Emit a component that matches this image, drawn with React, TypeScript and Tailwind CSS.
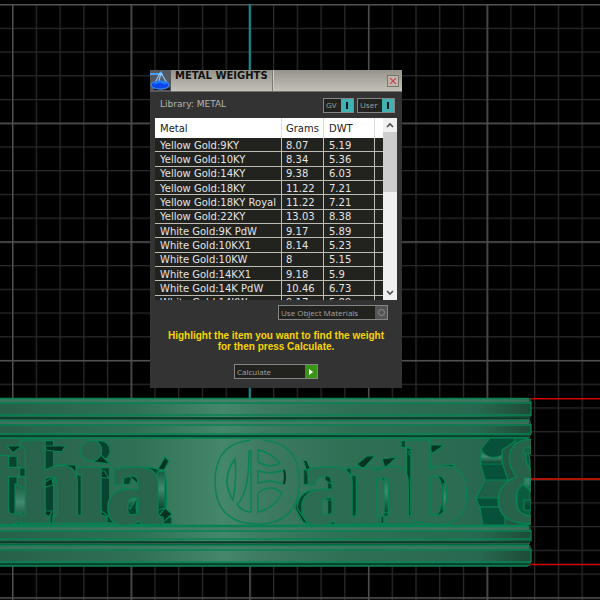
import React from "react";

const metals = [
  ["Yellow Gold:9KY", "8.07", "5.19"],
  ["Yellow Gold:10KY", "8.34", "5.36"],
  ["Yellow Gold:14KY", "9.38", "6.03"],
  ["Yellow Gold:18KY", "11.22", "7.21"],
  ["Yellow Gold:18KY Royal", "11.22", "7.21"],
  ["Yellow Gold:22KY", "13.03", "8.38"],
  ["White Gold:9K PdW", "9.17", "5.89"],
  ["White Gold:10KX1", "8.14", "5.23"],
  ["White Gold:10KW", "8", "5.15"],
  ["White Gold:14KX1", "9.18", "5.9"],
  ["White Gold:14K PdW", "10.46", "6.73"],
  ["White Gold:14KW", "9.17", "5.89"],
];

// Horizontal rails of the ring: top edge and height
const rails = [
  { y: 398, h: 20 },
  { y: 420, h: 17 },
  { y: 526, h: 16 },
  { y: 545, h: 20 },
];

// Recesses cut behind the lettering
const darkFacets = [
  "7,446 22,446 13,453", "28,447 38,447 33,452", "45,446 65,446 62,452 46,450",
  "59,465 75,465 79,470 72,477", "86,453 100,454 110,464 95,462",
  "91,471 104,471 109,478 97,477", "125,467 138,474 138,484 130,477",
  "165,457 169,461 164,470 158,469", "42,484 52,478 53,485 42,488",
  "165,508 172,514 160,525 152,525", "38,523 44,511 52,511 46,524",
  "100,510 108,516 100,524 91,524", "126,524 138,513 138,522",
  "303,460 307,461 314,478 310,480", "298,494 297,508 308,524 303,522 295,508",
  "325,472 331,474 331,484 325,480", "325,494 332,494 332,500 326,500",
  "353,469 362,469 359,475 353,474", "327,520 332,513 337,524 331,524",
  "356,518 364,516 369,524 362,524", "357,464 367,456 375,456 363,469",
  "382,459 397,457 385,468", "423,445 444,445 433,453",
  "408,452 424,447 425,452 410,455", "443,465 455,465 443,474",
  "412,520 420,515 432,520 425,524",
];

const litFacets = [
  "69,480 76,482 77,510 79,524 66,524", "15,484 27,490 27,510 35,524 15,524",
  "157,472 165,471 165,508 157,510", "122,487 138,497 130,509 122,500",
  "358,478 367,474 367,510 358,510", "384,480 394,472 395,515 384,512",
  "411,478 426,478 426,510 411,510", "443,484 452,480 455,505 450,520 443,510",
];

function Viewport() {
  return (
    <svg className="absolute inset-0 h-full w-full" aria-label="Ring model, front view">
      <defs>
        <pattern id="minor" x="12" y="4" width="23.73" height="23.73" patternUnits="userSpaceOnUse">
          <path d="M0 .5H24M.5 0V24" stroke="#2b2b2b" strokeWidth="1.5" />
        </pattern>
        <pattern id="major" x="12" y="4" width="118.65" height="118.65" patternUnits="userSpaceOnUse">
          <path d="M0 .7H119M.7 0V119" stroke="#505050" strokeWidth="1.4" />
        </pattern>
        <linearGradient id="metal" gradientUnits="userSpaceOnUse" x1="0" x2="532" y1="0" y2="0">
          <stop offset="0" stopColor="#28604a" />
          <stop offset=".25" stopColor="#2f7055" />
          <stop offset=".42" stopColor="#45876b" />
          <stop offset=".5" stopColor="#3d7a61" />
          <stop offset=".65" stopColor="#2f7055" />
          <stop offset=".9" stopColor="#296850" />
          <stop offset="1" stopColor="#1d4a37" />
        </linearGradient>
        <linearGradient id="wall" x1="0" x2="0" y1="0" y2="1">
          <stop offset="0" stopColor="#175a40" />
          <stop offset=".45" stopColor="#438a70" />
          <stop offset="1" stopColor="#06402b" />
        </linearGradient>
        <linearGradient id="groove" x1="0" x2="0" y1="0" y2="1">
          <stop offset="0" stopColor="#07543a" />
          <stop offset=".5" stopColor="#0a3c2a" />
          <stop offset="1" stopColor="#41705c" />
        </linearGradient>
        <clipPath id="body"><rect x="0" y="437" width="531" height="89" /></clipPath>
        <g id="left-word"><text x="-18 19 75 106" y="522">thia</text></g>
        <g id="right-word"><text x="300 350 406" y="522">anb</text></g>
      </defs>

      <rect x="0" y="4" width="100%" height="100%" fill="url(#minor)" />
      <rect x="0" y="4" width="100%" height="100%" fill="url(#major)" />
      <path d="M249.700 4V398" stroke="#0d8f91" strokeWidth="2" />
      <path d="M528 398.700H4000M528 564.500H4000" stroke="#d60404" strokeWidth="1.500" />
      <path d="M528 479H4000" stroke="#ad1404" strokeWidth="2" />

      <path d="M0 398H529L531 401V416L529 420L531 423V434L528 438V526L531 530V541L529 544L531 548V562L528 566H0Z" fill="#085b3d" />
      <rect x="0" y="438" width="529" height="87" fill="url(#metal)" />
      {rails.map((r) => (
        <g key={r.y}>
          <rect x="0" y={r.y} width="531" height={r.h} rx="2" fill="url(#metal)" />
          <rect x="0" y={r.y + 1} width="529" height="3" fill="#4c7d69" opacity=".65" />
          <path d={`M0 ${r.y + 0.5}H529M0 ${r.y + 5}H531M0 ${r.y + r.h - 3}H531`} stroke="#078253" strokeWidth="1.300" />
        </g>
      ))}
      {[417, 435, 541, 563].map((y) => (
        <rect key={y} x="0" y={y} width="530" height="3" fill="url(#groove)" />
      ))}
      <path d="M0 438H528M0 525.500H528M0 566H528M531 401V416M531 424V434M531 530V541M531 548V562" stroke="#078253" strokeWidth="1.300" />

      <g clipPath="url(#body)" stroke="#078253" strokeWidth="1.200" strokeLinejoin="miter">
        <g className="font-['Liberation_Serif',serif] text-[114px] font-bold">
          <use href="#left-word" x="9" fill="#07432f" stroke="#078253" strokeWidth="4" />
          <use href="#left-word" x="9" fill="#07432f" stroke="#07432f" strokeWidth="1.500" />
          <use href="#right-word" x="-5" fill="#07432f" stroke="#078253" strokeWidth="4" />
          <use href="#right-word" x="-5" fill="#07432f" stroke="#07432f" strokeWidth="1.500" />
          {litFacets.map((p) => <polygon key={p} points={p} fill="url(#wall)" />)}
          {darkFacets.map((p) => <polygon key={p} points={p} fill="#063322" />)}
          <use href="#left-word" strokeWidth="5" />
          <use href="#right-word" strokeWidth="5" />
          <use href="#left-word" fill="#29654d" stroke="#29654d" strokeWidth="2.500" />
          <use href="#right-word" fill="#2c6c52" stroke="#2c6c52" strokeWidth="2.500" />
        </g>

        <g fill="none" className="font-['Liberation_Serif',serif] text-[124px] font-bold">
          <text x="209" y="523">O</text>
          <ellipse cx="257" cy="481" rx="25" ry="42" fill="url(#metal)" stroke="none" />
          <path strokeWidth="1.500" d="M235 459Q220 479 233 500Q237 480 235 459ZM249 451H251V512Q242 512 237 504Q249 495 249 451ZM258 450Q270 452 280 463Q270 469 258 462ZM258 471Q272 475 284 470V484Q270 479 258 483ZM258 493Q271 483 282 493Q275 508 258 512Z" />
          <path d="M284 470Q286 477 284 484" stroke="#063a28" strokeWidth="2" />
        </g>

        <path d="M490 438H520L502 450V462L508 480L498 498L505 512V525H483L480 508L476 498L485 480L480 462L482 448Z" fill="#07513a" />
        <path d="M481 450Q490 462 502 455V464H481Z" fill="url(#wall)" />
        <path d="M485 480H508L498 498H476Z" fill="#1e6048" />
        <path d="M480 507H500" />
        <path d="M515 438H526L530 460V525H518Z" fill="#0b5b3e" />
        <g className="font-['Liberation_Serif',serif] text-[122px] font-bold">
          <text x="492" y="522" strokeWidth="3" fill="#27624a" style={{ paintOrder: "stroke" }}>&amp;</text>
        </g>
        <path d="M524 448H531V454H524ZM524 478H531V486H524ZM524 500H531V510H524Z" fill="url(#wall)" />
      </g>
    </svg>
  );
}

function ScaleIcon() {
  return (
    <svg viewBox="0 0 21 22" className="h-[22px] w-[21px] shrink-0 bg-[#55585c]" aria-hidden="true">
      <path d="M4 17Q11 23 20 17V20H4Z" fill="#17191e" />
      <path d="M0 3L9 3L11 1L13 4L12 6L9 5L0 5Z" fill="#4aa0ff" />
      <path d="M10 3L5 13M11 3L9 11M11 3L17 13" stroke="#8cc6ff" strokeWidth="1.200" fill="none" />
      <ellipse cx="10" cy="15" rx="9" ry="4" fill="#0a46e8" stroke="#3d8dff" />
      <path d="M4 14Q10 10 16 14" stroke="#1a7cff" strokeWidth="2" fill="none" />
    </svg>
  );
}

const smallButton =
  "flex h-[15px] items-center justify-between border border-[#858585] bg-[#22221e] pl-[2px] text-[8px] leading-3 text-[#a3a3a3] font-['Open_Sans',sans-serif]";

function Toggle({ label, width }: { label: string; width: string }) {
  return (
    <button type="button" aria-pressed="true" className={`${smallButton} ${width}`}>
      <span>{label}</span>
      <span className="flex h-[13px] w-3 items-center justify-center bg-[#42b1b2]">
        <span className="h-[7px] w-[2px] bg-[#031818]" />
      </span>
    </button>
  );
}

function Arrow({ down = false }: { down?: boolean }) {
  return (
    <button type="button" aria-label={down ? "Scroll down" : "Scroll up"} className="flex h-[14px] w-full shrink-0 items-center justify-center">
      <svg viewBox="0 0 8 6" className="h-[6px] w-2" aria-hidden="true">
        <path d={down ? "M1 1L4 4L7 1" : "M1 5L4 2L7 5"} fill="none" stroke="#505050" strokeWidth="1.700" />
      </svg>
    </button>
  );
}

const line = "border-b border-r border-[#bdbbb4]";

export default function App() {
  return (
    <main className="relative h-screen min-h-[600px] overflow-hidden bg-black font-['DejaVu_Sans',sans-serif] text-[10px]">
      <Viewport />
      <section aria-labelledby="title" className="absolute left-[150px] top-[70px] w-[252px] bg-[#333333] pb-[9px]">
        <header className="flex h-[22px] border-b border-[#77756f] bg-linear-to-b from-[#96938a] to-[#c3c1b9]">
          <ScaleIcon />
          <h1 id="title" className="w-[102px] shrink-0 border-r border-[#7b796f] pl-1 text-[10px] leading-3 font-bold whitespace-nowrap text-[#11110f]">METAL WEIGHTS</h1>
          <div className="flex flex-1 items-center justify-end border-l border-[#d0cec6] pr-[3px]">
            <button type="button" aria-label="Close" className="flex h-3 w-3 items-center justify-center border border-[#77746e] bg-[#bdb9b0]">
              <svg viewBox="0 0 8 8" className="h-2 w-2" aria-hidden="true"><path d="M1 1L7 7M7 1L1 7" stroke="#c94b4b" strokeWidth="1.200" /></svg>
            </button>
          </div>
        </header>

        <div className="flex h-[26px] items-center justify-between pr-[7px] pl-[10px]">
          <span className="text-[9px] text-[#b4b4b4]">Library: METAL</span>
          <div className="flex gap-[3px]">
            <Toggle label="GV" width="w-[31px]" />
            <Toggle label="User" width="w-[38px]" />
          </div>
        </div>

        <div className="mx-[5px] flex h-[182px] overflow-hidden">
          <div className="min-w-0 flex-1 overflow-hidden">
            <table className="h-[192px] w-full table-fixed border-separate border-spacing-0 bg-[#22221e] text-left leading-[11px] text-[#e4e4e4]">
              <colgroup>
                <col className="w-[127px]" />
                <col className="w-[42px]" />
                <col className="w-[51px]" />
                <col />
              </colgroup>
              <thead>
                <tr className="h-5 bg-white text-[#222222]">
                  <th scope="col" className="border-r border-[#dddddd] p-0 pl-[5px] font-normal">Metal</th>
                  <th scope="col" className="border-r border-[#dddddd] p-0 pl-1 font-normal">Grams</th>
                  <th scope="col" className="border-r border-[#dddddd] p-0 pl-[5px] font-normal">DWT</th>
                  <td className="p-0" />
                </tr>
              </thead>
              <tbody>
                {metals.map(([name, grams, dwt], i) => (
                  <tr key={i}>
                    <td className={`${line} p-0 pt-px pl-[5px] whitespace-nowrap`}>{name}</td>
                    <td className={`${line} p-0 pt-px pl-1`}>{grams}</td>
                    <td className={`${line} p-0 pt-px pl-[5px]`}>{dwt}</td>
                    <td className="border-b border-[#bdbbb4] p-0" />
                  </tr>
                ))}
              </tbody>
            </table>
          </div>
          <div className="flex w-[14px] flex-col bg-[#f0f0f0]">
            <Arrow />
            <div className="h-[60px] bg-[#cdcdcd]" />
            <div className="flex-1" />
            <Arrow down />
          </div>
        </div>

        <div className="mt-[5px] flex justify-end pr-[14px]">
          <button type="button" className={`${smallButton} w-[110px]`}>
            <span className="whitespace-nowrap">Use Object Materials</span>
            <span className="flex h-[13px] w-3 items-center justify-center bg-[#555555]">
              <span className="h-[7px] w-[7px] rounded-full border border-[#8b8b8b]" />
            </span>
          </button>
        </div>

        <p className="mt-[10px] text-center font-['Liberation_Sans',sans-serif] text-[10px] leading-[11px] font-bold text-[#f6d500]">
          Highlight the item you want to find the weight
          <br />
          for then press Calculate.
        </p>

        <div className="mt-3 flex justify-center">
          <button type="button" className={`${smallButton} w-[84px]`}>
            <span>Calculate</span>
            <span className="flex h-[13px] w-3 items-center justify-center bg-[#3a9418]">
              <svg viewBox="0 0 4 6" className="h-[6px] w-1" aria-hidden="true"><path d="M0 0L4 3L0 6Z" fill="#ffffff" /></svg>
            </span>
          </button>
        </div>
      </section>
    </main>
  );
}
